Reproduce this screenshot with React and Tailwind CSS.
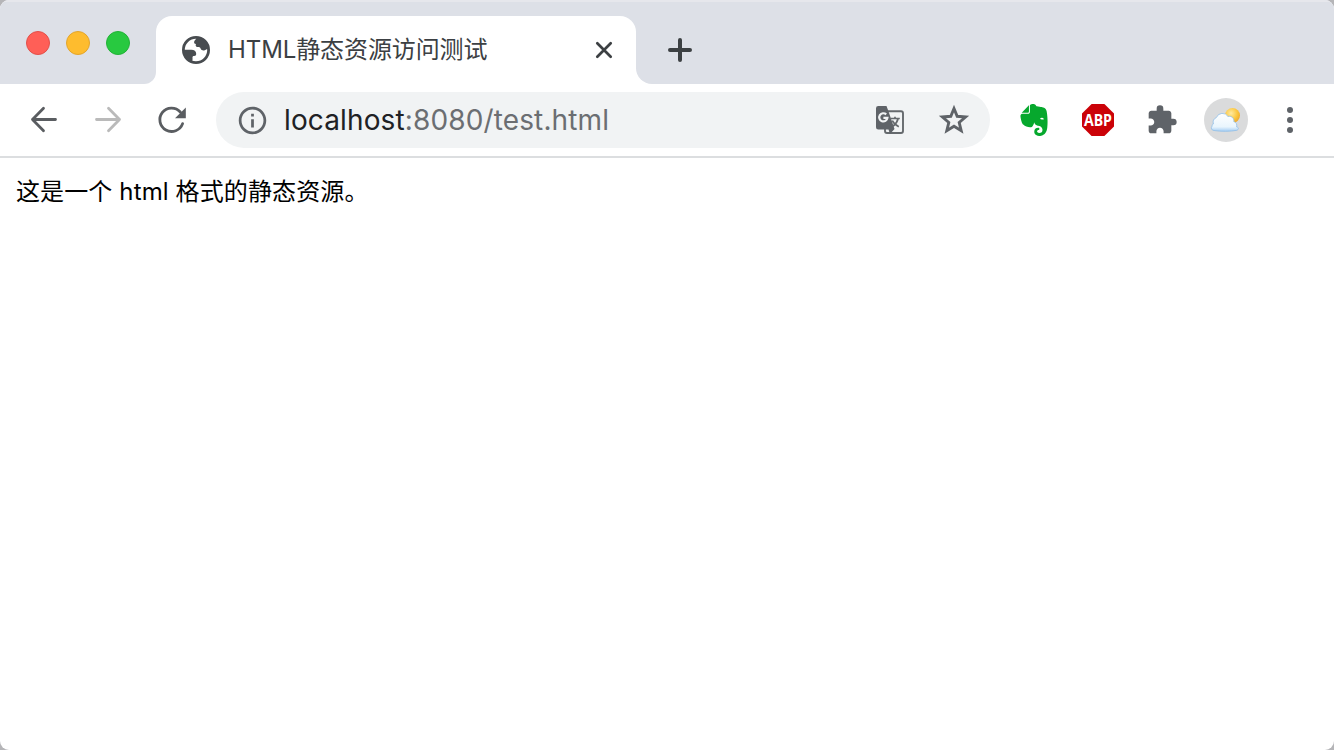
import { MdExtension, MdRefresh, MdInfoOutline } from "react-icons/md";
import { SiEvernote } from "react-icons/si";

function Globe() {
  return (
    <svg className="h-7 w-7 shrink-0" viewBox="0 0 28 28">
      <circle cx="14" cy="14" r="12.6" fill="#fff" stroke="#484c50" strokeWidth="2.800" />
      <path fill="#484c50" d="M14.500 1.500c-.2 2-1.500 2.200-2.200 3.700-.6 1.500.1 2.600 1.700 2.900-.8 1.500-.2 2.900 1.500 3 1.700 0 2.700.2 3.200 1.700.5 1.500 2.400 2 4 1.500 1-.3 1.600-1.300 3.800-.8C26.500 7 21.500 1.500 14.500 1.500zM1.500 13.800h7.800c3 0 4.800 1.600 4.900 4 0 1.400-.6 2.200-2.100 2.200-1.200 0-1.700.5-1.600 1.800.1 1.400.2 2.800-.8 4.200C4.500 24.500 1.500 19.500 1.500 13.800z" />
    </svg>
  );
}

function Translate() {
  return (
    <svg className="ml-auto h-7 w-7" viewBox="0 0 28 28">
      <rect x="9" y="5.200" width="18" height="21.800" rx="2" fill="#f1f3f4" stroke="#65696d" strokeWidth="1.900" />
      <path d="M2.300 0h8.200l1.700 4.500L18.500 23l-4.500 5-1.500-4.500H2.300A2.300 2.300 0 0 1 0 21.200V2.300A2.300 2.300 0 0 1 2.300 0z" fill="#5f6368" />
      <path d="M10.200 8.400a4.100 4.100 0 1 0 1.200 3.500H7.400" fill="none" stroke="#f1f3f4" strokeWidth="2.200" />
      <path d="M14.500 12.500h9.300M19 10.700v1.800M16.300 14.500c1.200 2.700 3.500 4.700 6.500 6.300M22 12.700c-.7 3.300-2.500 5.700-5.200 7.700" fill="none" stroke="#65696d" strokeWidth="1.700" />
    </svg>
  );
}

function Cloud() {
  return (
    <svg className="h-11 w-11" viewBox="0 0 44 44">
      <defs>
        <radialGradient id="sun" cx=".4" cy=".35" r=".7">
          <stop offset="0" stopColor="#ffeaa0" />
          <stop offset=".6" stopColor="#fbc740" />
          <stop offset="1" stopColor="#eda62c" />
        </radialGradient>
        <linearGradient id="cloud" x1="0" y1="0" x2="0" y2="1">
          <stop offset="0" stopColor="#ffffff" />
          <stop offset=".75" stopColor="#e9f5fd" />
          <stop offset="1" stopColor="#a4cdf3" />
        </linearGradient>
      </defs>
      <circle cx="22" cy="22" r="22" fill="#dadbdc" />
      <circle cx="28.500" cy="17.500" r="7.500" fill="url(#sun)" />
      <path d="M10 32.500a2.600 2.600 0 0 1-1.800-4.500c-.3-1.200.3-1.900 1.200-2a5.500 5.500 0 0 1 3-6.500 6.500 6.500 0 0 1 11.600-1 4.500 4.500 0 0 1 5.800 5.100 3.800 3.800 0 0 1 2.700 5.200c2.600.6 2.300 2.600.4 3.500-6 1.200-16 1.400-22.900.2z" fill="url(#cloud)" stroke="#90bfe9" strokeWidth=".8" />
    </svg>
  );
}

function TabStrip() {
  return (
    <header className="flex h-[84px] shrink-0 items-end border-t-2 border-[#e6e7ec] bg-[#dde0e7]">
      <div className="flex h-full w-36 items-start gap-4 pt-[29px] pl-[26px]">
        <span className="h-6 w-6 rounded-full border border-[#e2504a] bg-[#ff5f57]" />
        <span className="h-6 w-6 rounded-full border border-[#e3a52c] bg-[#febc2e]" />
        <span className="h-6 w-6 rounded-full border border-[#22b237] bg-[#28c940]" />
      </div>
      <div className="h-4 w-3 bg-white">
        <div className="h-4 w-3 rounded-br-[14px] bg-[#dde0e7]" />
      </div>
      <div className="flex h-[68px] w-[480px] items-center rounded-t-[16px] bg-white pl-[26px] pr-[23px]">
        <Globe />
        <h1 className="ml-[18px] whitespace-nowrap font-['Inter','Noto_Sans_CJK_SC',sans-serif] text-[24px] leading-[34px] tracking-[-0.1px] text-[#3c4043]">HTML静态资源访问测试</h1>
        <svg className="ml-auto h-[18px] w-[18px]" viewBox="0 0 18 18" fill="none" stroke="#3c4043" strokeWidth="2.700" strokeLinecap="round">
          <path d="M2.300 2.300l13.400 13.400M15.700 2.300L2.300 15.700" />
        </svg>
      </div>
      <div className="h-4 w-4 bg-white">
        <div className="h-4 w-4 rounded-bl-[16px] bg-[#dde0e7]" />
      </div>
      <svg className="mb-[22px] ml-4 h-6 w-6" viewBox="0 0 24 24" fill="none" stroke="#3c4043" strokeWidth="4" strokeLinecap="round">
        <path d="M12 2v20M2 12h20" />
      </svg>
    </header>
  );
}

function Toolbar() {
  return (
    <nav className="flex h-[74px] shrink-0 items-center border-b-2 border-[#dcdee0] bg-white pl-7">
      <svg className="h-8 w-8" viewBox="0 0 32 32" fill="none" stroke="#5a5d61" strokeWidth="2.800" strokeLinecap="round" strokeLinejoin="round">
        <path d="M27.500 15.500H4.500M15.500 4.300L4.500 15.500l11 11.200" />
      </svg>
      <svg className="ml-8 h-8 w-8" viewBox="0 0 32 32" fill="none" stroke="#bababa" strokeWidth="2.800" strokeLinecap="round" strokeLinejoin="round">
        <path d="M4.500 15.500h23M16.500 4.300l11 11.200-11 11.200" />
      </svg>
      <svg className="ml-8 h-8 w-8" viewBox="0 0 32 32">
        <path d="M26.600 19.600A11.700 11.700 0 1 1 24.300 8" fill="none" stroke="#5a5d61" strokeWidth="2.800" strokeLinecap="round" />
        <path d="M29.800 3.500v10.700H19z" fill="#5a5d61" />
      </svg>
      <div className="ml-7 flex h-14 w-[774px] items-center rounded-full bg-[#f1f3f4] pl-5">
        <MdInfoOutline className="h-[33px] w-[33px] text-[#5f6368]" />
        <p className="ml-[15px] whitespace-nowrap font-['Inter',sans-serif] text-[28px] leading-9 tracking-[0.13px] text-[#202124]">
          localhost<span className="text-[#6b6e72]">:8080/test.html</span>
        </p>
        <Translate />
        <svg className="mr-5 ml-[34px] h-8 w-8" viewBox="0 0 32 32" fill="none" stroke="#5f6368" strokeWidth="2.900">
          <path d="M16 4.500l3.200 7.800 8.400.7-6.400 5.500 2 8.200-7.200-4.400-7.200 4.400 2-8.200L4.400 13l8.400-.7z" />
        </svg>
      </div>
      <SiEvernote className="ml-7 h-8 w-8 text-[#06a82d]" />
      <div className="ml-8 flex h-8 w-8 items-center justify-center bg-[#cb0208] font-['Open_Sans',sans-serif] text-[16px] font-bold text-white [clip-path:polygon(30%_0,70%_0,100%_30%,100%_70%,70%_100%,30%_100%,0_70%,0_30%)]">
        <span className="scale-x-[0.88]">ABP</span>
      </div>
      <MdExtension className="ml-8 h-8 w-8 text-[#5f6368]" />
      <div className="ml-[26px]"><Cloud /></div>
      <div className="ml-[39px] flex flex-col gap-1">
        <span className="h-1.5 w-1.5 rounded-full bg-[#5f6368]" />
        <span className="h-1.5 w-1.5 rounded-full bg-[#5f6368]" />
        <span className="h-1.5 w-1.5 rounded-full bg-[#5f6368]" />
      </div>
    </nav>
  );
}

export default function App() {
  return (
    <div className="h-[750px] w-[1334px] overflow-hidden bg-[#b5b5b8]">
      <div className="flex h-full flex-col overflow-hidden rounded-[9px] bg-white">
        <TabStrip />
        <Toolbar />
        <main className="flex-1 px-4 pt-4">
          <p className="font-['Inter','Noto_Sans_CJK_SC',sans-serif] text-[24px] leading-[36px] tracking-[0.12px] text-black">这是一个 html 格式的静态资源。</p>
        </main>
      </div>
    </div>
  );
}
